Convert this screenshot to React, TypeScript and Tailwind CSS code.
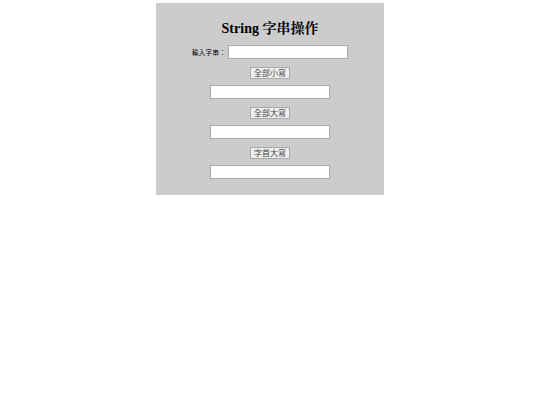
export default function App() {
  const btn =
    "h-[12px] px-[3px] bg-[#efefef] border border-[#a8a8a8] text-[8px] leading-[10px] text-[#444] font-['Noto_Sans_CJK_TC',sans-serif]";
  const input = "block w-[120px] h-[14px] bg-white border border-[#a9a9a9]";
  return (
    <div className="w-full bg-white pt-[3px] font-['Liberation_Serif','Noto_Serif_CJK_TC','Noto_Sans_CJK_TC',serif]">
      <div className="mx-auto w-[228px] h-[192px] bg-[#cccccc] flex flex-col items-center pt-[17px]">
        <h1 className="h-[17px] text-[14px] leading-[17px] font-bold text-black">String 字串操作</h1>
        <div className="mt-[8px] flex items-center gap-[2px]">
          <span className="text-[6.5px] leading-[8px] text-black tracking-[0.3px] font-['Noto_Sans_CJK_TC',sans-serif]">輸入字串：</span>
          <input className={input} />
        </div>
        <button className={`${btn} mt-[8px]`}>全部小寫</button>
        <input className={`${input} mt-[6px]`} />
        <button className={`${btn} mt-[8px]`}>全部大寫</button>
        <input className={`${input} mt-[6px]`} />
        <button className={`${btn} mt-[8px]`}>字首大寫</button>
        <input className={`${input} mt-[6px]`} />
      </div>
    </div>
  );
}
